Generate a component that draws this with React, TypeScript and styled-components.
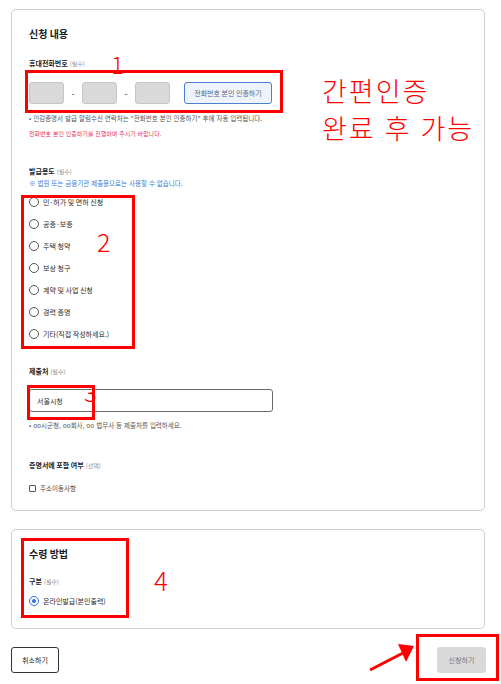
import React from "react";
import styled, { createGlobalStyle } from "styled-components";

const Global = createGlobalStyle`
  html, body { margin: 0; padding: 0; background: #fff; }
  body { font-family: "Noto Sans CJK KR", "Noto Sans", sans-serif; color: #222; }
  * { box-sizing: border-box; }
`;

const Page = styled.div`
  position: relative;
  width: 501px;
  height: 684px;
  padding: 9px 16px 0 11px;
  display: flex;
  flex-direction: column;
`;

const Card = styled.section<{ $mt?: number; $h: number }>`
  margin-top: ${(p) => p.$mt ?? 0}px;
  height: ${(p) => p.$h}px;
  border: 1px solid #cfcfcf;
  border-radius: 5px;
  padding: 17px 17px 0 17px;
  display: flex;
  flex-direction: column;
`;

const Title = styled.h2`
  margin: 0;
  font-size: 10px;
  line-height: 14px;
  font-weight: 700;
  color: #1a1a1a;
`;

const Label = styled.div<{ $mt: number }>`
  margin-top: ${(p) => p.$mt}px;
  font-size: 7px;
  line-height: 10px;
  font-weight: 700;
  color: #222;
`;

const Req = styled.span`
  font-weight: 400;
  color: #8a8a8a;
  font-size: 6px;
  margin-left: 2px;
`;

const Hint = styled.div<{ $mt: number; $color?: string; $size?: number }>`
  margin-top: ${(p) => p.$mt}px;
  font-size: ${(p) => p.$size ?? 6.5}px;
  line-height: 9px;
  word-spacing: 0.5px;
  color: ${(p) => p.$color ?? "#555"};
  white-space: nowrap;
`;

const PhoneRow = styled.div`
  margin-top: 13px;
  display: flex;
  align-items: center;
  height: 22px;
`;

const PhoneBox = styled.div`
  width: 35px;
  height: 22px;
  background: #d9d9d9;
  border: 1px solid #c6c6c6;
  border-radius: 3px;
`;

const Dash = styled.span`
  width: 18px;
  text-align: center;
  font-size: 9px;
  color: #333;
`;

const VerifyButton = styled.button`
  margin-left: 14px;
  width: 88px;
  height: 22px;
  background: #eef4fd;
  border: 1px solid #4d7fd6;
  border-radius: 3px;
  font-family: inherit;
  font-size: 7px;
  color: #56657a;
  padding: 0;
  cursor: pointer;
`;

const RadioList = styled.div`
  margin-top: 3px;
  display: flex;
  flex-direction: column;
`;

const RadioItem = styled.label`
  height: 22px;
  display: flex;
  align-items: center;
  gap: 4px;
  font-size: 7px;
  color: #2a2a2a;
`;

const RadioCircle = styled.span<{ $checked?: boolean }>`
  width: 10px;
  height: 10px;
  border-radius: 50%;
  border: 1px solid ${(p) => (p.$checked ? "#2f6fdc" : "#555")};
  display: inline-flex;
  align-items: center;
  justify-content: center;
  background: #fff;
  &::after {
    content: "";
    display: ${(p) => (p.$checked ? "block" : "none")};
    width: 4px;
    height: 4px;
    border-radius: 50%;
    background: #2f6fdc;
  }
`;

const TextInput = styled.div`
  margin-top: 12px;
  width: 244px;
  height: 23px;
  border: 1px solid #6a6a6a;
  border-radius: 3px;
  padding: 0 7px;
  display: flex;
  align-items: center;
  font-size: 7px;
  color: #333;
`;

const CheckRow = styled.label`
  margin-top: 12px;
  display: flex;
  align-items: center;
  gap: 4px;
  font-size: 6.5px;
  color: #444;
`;

const CheckBox = styled.span`
  width: 7px;
  height: 7px;
  border: 1px solid #555;
  border-radius: 1px;
`;

const Footer = styled.div`
  margin-top: 18px;
  display: flex;
  justify-content: space-between;
  align-items: center;
`;

const FootButton = styled.button<{ $primary?: boolean }>`
  height: 26px;
  width: ${(p) => (p.$primary ? 49 : 48)}px;
  padding: 0;
  border-radius: 3px;
  font-family: inherit;
  font-size: 7px;
  border: ${(p) => (p.$primary ? "none" : "1px solid #333")};
  background: ${(p) => (p.$primary ? "#d9d9d9" : "#fff")};
  color: ${(p) => (p.$primary ? "#777" : "#222")};
  margin-right: ${(p) => (p.$primary ? -1 : 0)}px;
`;

/* annotation overlay */
const MarkBox = styled.div<{ $x: number; $y: number; $w: number; $h: number }>`
  position: absolute;
  left: ${(p) => p.$x}px;
  top: ${(p) => p.$y}px;
  width: ${(p) => p.$w}px;
  height: ${(p) => p.$h}px;
  border: 3px solid #ff0000;
  pointer-events: none;
`;

const MarkText = styled.div<{ $x: number; $y: number; $size: number }>`
  position: absolute;
  left: ${(p) => p.$x}px;
  top: ${(p) => p.$y}px;
  font-family: "Noto Sans CJK KR", sans-serif;
  font-size: ${(p) => p.$size}px;
  line-height: 1;
  font-weight: 300;
  color: #ff0000;
  white-space: nowrap;
  letter-spacing: 2px;
  word-spacing: 1px;
  pointer-events: none;
`;

const ArrowSvg = styled.svg`
  position: absolute;
  left: 365px;
  top: 636px;
  pointer-events: none;
`;

const purposes = [
  "인·허가 및 면허 신청",
  "공증·보증",
  "주택 청약",
  "보상 청구",
  "계약 및 사업 신청",
  "경력 증명",
  "기타(직접 작성하세요.)",
];

export default function App() {
  return (
    <>
      <Global />
      <Page>
        <Card $h={502}>
          <Title>신청 내용</Title>
          <Label $mt={17}>
            휴대전화번호<Req>(필수)</Req>
          </Label>
          <PhoneRow>
            <PhoneBox />
            <Dash>-</Dash>
            <PhoneBox />
            <Dash>-</Dash>
            <PhoneBox />
            <VerifyButton>전화번호 본인 인증하기</VerifyButton>
          </PhoneRow>
          <Hint $mt={10}>• 인감증명서 발급 알림수신 연락처는 "전화번호 본인 인증하기" 후에 자동 입력됩니다.</Hint>
          <Hint $mt={6} $size={6} $color="#e5325a">전화번호 본인 인증하기를 진행하여 주시기 바랍니다.</Hint>

          <Label $mt={28}>
            발급용도<Req>(필수)</Req>
          </Label>
          <Hint $mt={2} $color="#3a7bd5">※ 법원 또는 금융기관 제출용으로는 사용할 수 없습니다.</Hint>
          <RadioList>
            {purposes.map((p) => (
              <RadioItem key={p}>
                <RadioCircle />
                {p}
              </RadioItem>
            ))}
          </RadioList>

          <Label $mt={21}>
            제출처<Req>(필수)</Req>
          </Label>
          <TextInput>서울시청</TextInput>
          <Hint $mt={9}>• oo시군청, oo회사, oo 법무사 등 제출처를 입력하세요.</Hint>

          <Label $mt={30}>
            증명서에 포함 여부<Req>(선택)</Req>
          </Label>
          <CheckRow>
            <CheckBox />
            주소이동사항
          </CheckRow>
        </Card>

        <Card $mt={18} $h={100}>
          <Title>수령 방법</Title>
          <Label $mt={15}>
            구분<Req>(필수)</Req>
          </Label>
          <RadioList>
            <RadioItem>
              <RadioCircle $checked />
              온라인발급(본인출력)
            </RadioItem>
          </RadioList>
        </Card>

        <Footer>
          <FootButton>취소하기</FootButton>
          <FootButton $primary>신청하기</FootButton>
        </Footer>

        <MarkBox $x={25} $y={70} $w={258} $h={43} />
        <MarkText $x={111} $y={52} $size={24}>1</MarkText>
        <MarkText $x={322} $y={77} $size={27}>간편인증</MarkText>
        <MarkText $x={322} $y={114} $size={27}>완료 후 가능</MarkText>

        <MarkBox $x={21} $y={195} $w={114} $h={154} />
        <MarkText $x={97} $y={229} $size={25}>2</MarkText>

        <MarkBox $x={27} $y={385} $w={68} $h={35} />
        <MarkText $x={84} $y={380} $size={24}>3</MarkText>

        <MarkBox $x={21} $y={538} $w={108} $h={80} />
        <MarkText $x={154} $y={567} $size={26}>4</MarkText>

        <MarkBox $x={416} $y={634} $w={83} $h={47} />
        <ArrowSvg width="52" height="40" viewBox="0 0 52 40">
          <line x1="5" y1="34" x2="38" y2="17" stroke="#ff0000" strokeWidth="3" />
          <polygon points="49,10 33,8 41,26" fill="#ff0000" />
        </ArrowSvg>
      </Page>
    </>
  );
}
